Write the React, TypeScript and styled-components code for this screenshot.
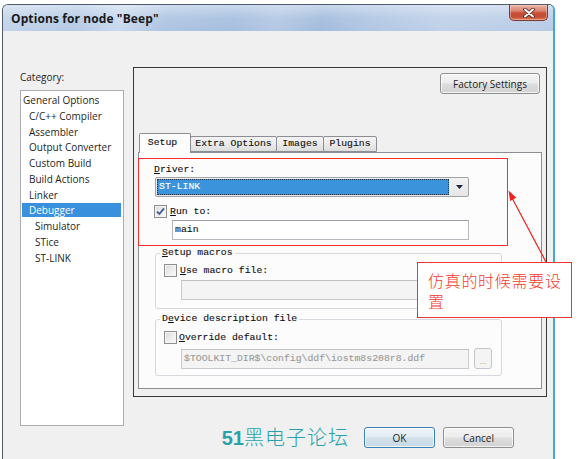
import React from 'react';
import styled, { createGlobalStyle } from 'styled-components';

const UI = `"Open Sans", "Liberation Sans", Arial, sans-serif`;
const MONO = `"Liberation Mono", "DejaVu Sans Mono", monospace`;
const CJK = `"Noto Sans CJK SC", "Noto Sans", sans-serif`;

const GlobalStyle = createGlobalStyle`
  html, body { margin: 0; padding: 0; background: #ffffff; }
  body { font-family: ${UI}; }
  * { box-sizing: border-box; }
`;

const Stage = styled.div`
  position: relative;
  width: 584px;
  height: 459px;
  overflow: hidden;
  padding: 4px 0 0 2px;
  background: #ffffff;
`;

const Win = styled.div`
  width: 553px;
  height: 480px;
  display: flex;
  flex-direction: column;
  border: 1px solid #4d5b6c;
  border-right: 2px solid #45a7d8;
  border-bottom: none;
  border-radius: 6px 6px 0 0;
  background: #f0f0f0;
  overflow: hidden;
`;

const TitleBar = styled.div`
  flex: none;
  height: 26px;
  display: flex;
  justify-content: space-between;
  align-items: flex-start;
  background:
    linear-gradient(180deg, rgba(255,255,255,0.4) 0%, rgba(255,255,255,0.08) 50%, rgba(255,255,255,0) 100%),
    linear-gradient(105deg, #c3d5eb 0%, #b5cae5 14%, #c9d9ee 22%, #aec5e2 30%, #a6bfdf 42%, #b4c8e4 50%, #a3bcdd 58%, #b0c6e3 66%, #c0d1e9 80%, #b8cce6 100%);
`;

const Title = styled.div`
  padding: 7px 0 0 8px;
  font: 700 12px/14px ${UI};
  letter-spacing: 0.1px;
  color: #1a1a1a;
`;

const CloseButton = styled.div`
  width: 39px;
  height: 16px;
  margin-right: 5px;
  display: flex;
  align-items: center;
  justify-content: center;
  border: 1px solid #7b3a30;
  border-top: none;
  border-radius: 0 0 5px 5px;
  background: linear-gradient(180deg, #eab3a6 0%, #d98470 40%, #c9513a 52%, #c24a31 75%, #d67a5c 100%);
  box-shadow: inset 0 0 0 1px rgba(255, 220, 210, 0.45);
`;

const Client = styled.div`
  flex: 1;
  display: grid;
  grid-template-columns: 104px 414px;
  column-gap: 9px;
  align-items: start;
  padding: 36px 0 0 17px;
`;

const LeftCol = styled.div`
  display: flex;
  flex-direction: column;
`;

const CategoryLabel = styled.div`
  margin-top: 3px;
  height: 14px;
  font: 400 10px/14px ${UI};
  color: #1e1e1e;
`;

const CategoryList = styled.div`
  margin-top: 6px;
  height: 336px;
  padding-top: 2px;
  background: #ffffff;
  border: 1px solid #abadb3;
  display: flex;
  flex-direction: column;
`;

const CategoryItem = styled.div<{ $level: number; $selected?: boolean }>`
  height: 14px;
  margin: 0 2px 1.75px 1px;
  padding-left: ${(p) => 1 + p.$level * 6}px;
  font: 400 10px/14px ${UI};
  color: ${(p) => (p.$selected ? '#ffffff' : '#1e1e1e')};
  background: ${(p) => (p.$selected ? '#3990dc' : 'transparent')};
  white-space: nowrap;
`;

const RightCol = styled.div`
  display: flex;
  flex-direction: column;
`;

const Panel = styled.div`
  height: 330px;
  border: 1px solid #383838;
  padding: 5px 4px 7px 4px;
  display: flex;
  flex-direction: column;
`;

const Win7Button = styled.div<{ $default?: boolean }>`
  height: 21px;
  display: flex;
  align-items: center;
  justify-content: center;
  border: 1px solid ${(p) => (p.$default ? '#3c7fb1' : '#8e8f8f')};
  border-radius: 3px;
  background: ${(p) =>
    p.$default
      ? 'linear-gradient(180deg, #edf4f9 0%, #e2ecf3 48%, #d2e0ea 52%, #c8d9e6 100%)'
      : 'linear-gradient(180deg, #f4f4f4 0%, #ececec 48%, #dedede 52%, #d2d2d2 100%)'};
  box-shadow: inset 0 0 0 1px rgba(255, 255, 255, 0.75);
  font: 400 10px/12px ${UI};
  color: #1e1e1e;
`;

const FactoryButton = styled(Win7Button)`
  align-self: flex-end;
  width: 100px;
  margin-right: 2px;
`;

const TabStrip = styled.div`
  margin-top: 39px;
  height: 19px;
  padding-left: 1px;
  display: flex;
  align-items: flex-end;
  position: relative;
  z-index: 1;
`;

const monoInk = `
  font-family: ${MONO};
  font-size: 9.8px;
  -webkit-text-stroke: 0.12px currentColor;
`;

const Tab = styled.div<{ $active?: boolean; $w: number }>`
  width: ${(p) => p.$w}px;
  height: ${(p) => (p.$active ? 20 : 16)}px;
  margin-bottom: ${(p) => (p.$active ? -1 : 0)}px;
  margin-left: ${(p) => (p.$active ? 0 : -1)}px;
  padding-right: ${(p) => (p.$active ? 5 : 0)}px;
  padding-bottom: ${(p) => (p.$active ? 1 : 0)}px;
  display: flex;
  align-items: center;
  justify-content: center;
  border: 1px solid #8c8e94;
  border-bottom: ${(p) => (p.$active ? 'none' : '1px solid #8c8e94')};
  border-radius: 2px 2px 0 0;
  background: ${(p) =>
    p.$active ? '#fcfcfc' : 'linear-gradient(180deg, #f3f3f3 0%, #ebebeb 50%, #dddddd 100%)'};
  ${monoInk}
  line-height: 12px;
  color: #111;
  white-space: nowrap;
  &:first-child { margin-left: 0; }
`;

const TabPage = styled.div`
  position: relative;
  flex: 1;
  border: 1px solid #8c8e94;
  background: #fcfcfc;
  padding: 10px 0 0 16px;
  display: flex;
  flex-direction: column;
  align-items: flex-start;
`;

const FieldLabel = styled.div`
  height: 14px;
  margin-left: -1px;
  ${monoInk}
  line-height: 14px;
  color: #111;
  white-space: nowrap;
`;

const Combo = styled.div`
  width: 314px;
  height: 20px;
  padding: 1px;
  display: flex;
  border: 1px solid #a3a3a3;
  border-radius: 2px;
  background: linear-gradient(180deg, #f2f2f2 0%, #e6e6e6 100%);
`;

const ComboValue = styled.div`
  flex: 1;
  padding-left: 1px;
  border: 1px dotted #18324f;
  background: #3a93db;
  ${monoInk}
  line-height: 14px;
  color: #ffffff;
`;

const ComboArrow = styled.div`
  width: 18px;
  display: flex;
  align-items: center;
  justify-content: center;
  padding-left: 2px;
`;

const CheckRow = styled.div<{ $gap: number; $indent?: number }>`
  display: flex;
  align-items: center;
  gap: ${(p) => p.$gap}px;
  height: 13px;
  margin-left: ${(p) => p.$indent ?? 0}px;
  ${monoInk}
  line-height: 13px;
  color: #111;
  white-space: nowrap;
`;

const CheckBox = styled.span`
  flex: none;
  width: 13px;
  height: 13px;
  display: flex;
  align-items: center;
  justify-content: center;
  border: 1px solid #8f8f8f;
  background: linear-gradient(135deg, #d8d8d8 0%, #ececec 50%, #fbfbfb 100%);
  box-shadow: inset 0 0 0 1px #f4f4f4;
  -webkit-text-stroke: 0;
`;

const TextBox = styled.div<{ $w: number; $disabled?: boolean; $indent?: number }>`
  width: ${(p) => p.$w}px;
  height: 20px;
  margin-left: ${(p) => p.$indent ?? 0}px;
  padding-left: 2px;
  border: 1px solid ${(p) => (p.$disabled ? '#c9cbcd' : '#b5b8bd')};
  border-top-color: ${(p) => (p.$disabled ? '#bfc1c3' : '#9a9da3')};
  background: ${(p) => (p.$disabled ? '#f4f4f4' : '#ffffff')};
  ${monoInk}
  line-height: 18px;
  color: ${(p) => (p.$disabled ? '#9a9a9a' : '#111')};
  white-space: nowrap;
  overflow: hidden;
`;

const Group = styled.fieldset<{ $top: number; $pt: number; $pb: number }>`
  width: 347px;
  margin: ${(p) => p.$top}px 0 0 0;
  padding: ${(p) => p.$pt}px 0 ${(p) => p.$pb}px 4px;
  min-width: 0;
  border: 1px solid #d5d9dd;
  border-radius: 3px;
  display: flex;
  flex-direction: column;
  align-items: flex-start;
`;

const GroupLegend = styled.legend`
  padding: 0 2px;
  ${monoInk}
  line-height: 12px;
  color: #111;
`;

const InputRow = styled.div`
  display: flex;
  align-items: center;
  gap: 5px;
  margin-left: 21px;
`;

const BrowseButton = styled.div`
  width: 18px;
  height: 21px;
  display: flex;
  align-items: flex-end;
  justify-content: center;
  padding-bottom: 3px;
  border: 1px solid #c3c6c9;
  border-radius: 3px;
  background: #f4f4f4;
  font: 400 8px/8px ${UI};
  color: #a0a0a0;
`;

const Highlight = styled.div`
  position: absolute;
  left: -1px;
  top: 5px;
  width: 370px;
  height: 88px;
  border: 1px solid #ff2a2a;
  pointer-events: none;
`;

const BottomRow = styled.div`
  margin-top: 30px;
  height: 21px;
  padding-right: 33px;
  display: flex;
  align-items: center;
  justify-content: flex-end;
`;

const Watermark = styled.div`
  margin-right: 15px;
  font: 300 20px/21px ${CJK};
  letter-spacing: 1px;
  color: #27a2ab;
  white-space: nowrap;
  b {
    font: 700 20px/21px "Liberation Sans", Arial, sans-serif;
    letter-spacing: 0;
  }
`;

const DialogButton = styled(Win7Button)`
  width: 71px;
  & + & { margin-left: 8px; }
`;

const Callout = styled.div`
  position: absolute;
  left: 417px;
  top: 262px;
  width: 155px;
  height: 56px;
  padding: 7px 0 0 10px;
  border: 1px solid #f03434;
  background: #ffffff;
  font: 300 16px/21px ${CJK};
  letter-spacing: 0.7px;
  color: #f53c2c;
`;

const ArrowLayer = styled.svg`
  position: absolute;
  left: 0;
  top: 0;
  pointer-events: none;
`;

const Check = () => (
  <svg width="9" height="9" viewBox="0 0 9 9">
    <path d="M1 4.6 L3.4 7 L8 1.4" fill="none" stroke="#3d5a94" strokeWidth="1.8" />
  </svg>
);

const categories: { label: string; level: number; selected?: boolean }[] = [
  { label: 'General Options', level: 0 },
  { label: 'C/C++ Compiler', level: 1 },
  { label: 'Assembler', level: 1 },
  { label: 'Output Converter', level: 1 },
  { label: 'Custom Build', level: 1 },
  { label: 'Build Actions', level: 1 },
  { label: 'Linker', level: 1 },
  { label: 'Debugger', level: 1, selected: true },
  { label: 'Simulator', level: 2 },
  { label: 'STice', level: 2 },
  { label: 'ST-LINK', level: 2 },
];

export default function App() {
  return (
    <>
      <GlobalStyle />
      <Stage>
        <Win>
          <TitleBar>
            <Title>Options for node "Beep"</Title>
            <CloseButton>
              <svg width="12" height="10" viewBox="0 0 12 10">
                <path d="M2 1.5 L10 8.5 M10 1.5 L2 8.5" stroke="#5b2119" strokeWidth="3.6" strokeLinecap="round" />
                <path d="M2 1.5 L10 8.5 M10 1.5 L2 8.5" stroke="#ffffff" strokeWidth="2" strokeLinecap="round" />
              </svg>
            </CloseButton>
          </TitleBar>
          <Client>
            <LeftCol>
              <CategoryLabel>Category:</CategoryLabel>
              <CategoryList>
                {categories.map((c) => (
                  <CategoryItem key={c.label} $level={c.level} $selected={c.selected}>
                    {c.label}
                  </CategoryItem>
                ))}
              </CategoryList>
            </LeftCol>
            <RightCol>
              <Panel>
                <FactoryButton>Factory Settings</FactoryButton>
                <TabStrip>
                  <Tab $active $w={52}>Setup</Tab>
                  <Tab $w={87}>Extra Options</Tab>
                  <Tab $w={48}>Images</Tab>
                  <Tab $w={54}>Plugins</Tab>
                </TabStrip>
                <TabPage>
                  <FieldLabel>
                    <u>D</u>river:
                  </FieldLabel>
                  <Combo>
                    <ComboValue>ST-LINK</ComboValue>
                    <ComboArrow>
                      <svg width="7" height="4" viewBox="0 0 7 4">
                        <path d="M0 0 H7 L3.5 4 Z" fill="#1b2440" />
                      </svg>
                    </ComboArrow>
                  </Combo>
                  <CheckRow $gap={3} $indent={-1} style={{ marginTop: 8 }}>
                    <CheckBox>
                      <Check />
                    </CheckBox>
                    <span>
                      <u>R</u>un to:
                    </span>
                  </CheckRow>
                  <TextBox $w={297} $indent={17} style={{ marginTop: 2 }}>
                    main
                  </TextBox>
                  <Group $top={7} $pt={5} $pb={8}>
                    <GroupLegend>
                      <u>S</u>etup macros
                    </GroupLegend>
                    <CheckRow $gap={3} $indent={4}>
                      <CheckBox />
                      <span>
                        <u>U</u>se macro file:
                      </span>
                    </CheckRow>
                    <TextBox $w={311} $disabled $indent={21} style={{ marginTop: 3 }} />
                  </Group>
                  <Group $top={4} $pt={6} $pb={6}>
                    <GroupLegend>
                      D<u>e</u>vice description file
                    </GroupLegend>
                    <CheckRow $gap={2} $indent={4}>
                      <CheckBox />
                      <span>
                        <u>O</u>verride default:
                      </span>
                    </CheckRow>
                    <InputRow style={{ marginTop: 4 }}>
                      <TextBox $w={288} $disabled>
                        $TOOLKIT_DIR$\config\ddf\iostm8s208r8.ddf
                      </TextBox>
                      <BrowseButton>...</BrowseButton>
                    </InputRow>
                  </Group>
                  <Highlight />
                </TabPage>
              </Panel>
              <BottomRow>
                <Watermark>
                  <b>51</b>黑电子论坛
                </Watermark>
                <DialogButton $default>OK</DialogButton>
                <DialogButton>Cancel</DialogButton>
              </BottomRow>
            </RightCol>
          </Client>
        </Win>
        <ArrowLayer width="584" height="459" viewBox="0 0 584 459">
          <line x1="546" y1="262" x2="511" y2="196" stroke="#f02020" strokeWidth="1.2" />
          <polygon points="508.5,190.5 516.3,197.8 510.1,201" fill="#f02020" />
        </ArrowLayer>
        <Callout>仿真的时候需要设置</Callout>
      </Stage>
    </>
  );
}
